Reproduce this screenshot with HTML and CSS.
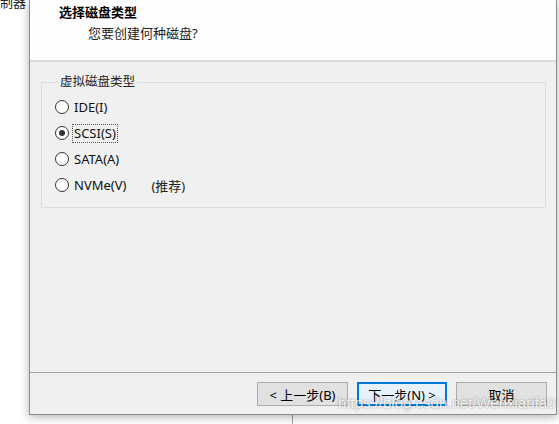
FILE: index.html
```html
<!DOCTYPE html>
<html lang="zh-CN">
<head>
    <meta charset="UTF-8">
    <meta name="viewport" content="width=device-width, initial-scale=1.0">
    <title>新建虚拟机向导</title>

    <link rel="stylesheet" href="styles.css">
</head>
<body>
    <div class="behind-text">制器</div>
    <div class="behind-line"></div>

    <div class="wizard">
        <div class="wizard-header">
            <div class="wizard-title">选择磁盘类型</div>
            <div class="wizard-subtitle">您要创建何种磁盘?</div>
        </div>

        <div class="wizard-body">
            <fieldset class="group">
                <legend class="group-title">虚拟磁盘类型</legend>
                <div class="radio-row">
                    <span class="radio"></span>
                    <span class="radio-label">IDE(I)</span>
                </div>
                <div class="radio-row">
                    <span class="radio checked"></span>
                    <span class="radio-label focused">SCSI(S)</span>
                </div>
                <div class="radio-row">
                    <span class="radio"></span>
                    <span class="radio-label">SATA(A)</span>
                </div>
                <div class="radio-row">
                    <span class="radio"></span>
                    <span class="radio-label">NVMe(V)</span>
                    <span class="hint">(推荐)</span>
                </div>
            </fieldset>
        </div>

        <div class="wizard-footer">
            <button class="btn">&lt; 上一步(B)</button>
            <button class="btn btn-default">下一步(N) &gt;</button>
            <button class="btn">取消</button>
        </div>
    </div>

    <div class="watermark">https://blog.csdn.net/Wenxiarifa0</div>
</body>
</html>
```

FILE: styles.css
```css
body {
    margin: 0;
    background-color: #ffffff;
    font-family: 'Noto Sans', 'Noto Sans CJK SC', sans-serif;
    font-size: 13px;
    color: #000;
    overflow: hidden;
}
.behind-text {
    position: absolute;
    left: 0;
    top: -6px;
    font-size: 13px;
    line-height: 16px;
    color: #222;
}
.behind-line {
    position: absolute;
    left: 292px;
    top: 400px;
    width: 1px;
    height: 30px;
    background-color: #a0a0a0;
}
.wizard {
    position: absolute;
    left: 29px;
    top: 0;
    width: 526px;
    border: 1px solid #8c8c8c;
    border-top: none;
    background-color: #f0f0f0;
    box-shadow: 0 2px 9px rgba(0,0,0,0.3);
}
.wizard-header {
    background-color: #fefefe;
    border-bottom: 2px solid #dadada;
    box-sizing: border-box;
    height: 62px;
}
.wizard-title {
    padding: 3px 0 0 29px;
    font-weight: bold;
    line-height: 18px;
}
.wizard-subtitle {
    padding: 3px 0 0 58px;
    line-height: 18px;
    color: #222;
}
.wizard-body {
    height: 311px;
    padding: 12px 10px 0 11px;
    box-sizing: border-box;
    border-bottom: 1px solid #a0a0a0;
}
.group {
    margin: 0;
    padding: 4px 0 9px 13px;
    border: 1px solid #dcdcdc;
    border-radius: 0;
}
.group-title {
    padding: 0 2px;
    margin-left: 3px;
    font-size: 12.5px;
    line-height: 16px;
    color: #222;
}
.radio-row {
    display: flex;
    align-items: center;
    height: 26px;
}
.radio {
    width: 12px;
    height: 12px;
    border: 1px solid #333;
    border-radius: 50%;
    background-color: #fff;
    display: flex;
    align-items: center;
    justify-content: center;
    margin-right: 3px;
}
.radio.checked::after {
    content: "";
    width: 6px;
    height: 6px;
    border-radius: 50%;
    background-color: #333;
}
.radio-label {
    line-height: 17px;
    padding: 0 1px;
    border: 1px dotted transparent;
    color: #111;
}
.radio-label.focused {
    border-color: #555;
}
.hint {
    margin-left: 23px;
    color: #222;
}
.wizard-footer {
    display: flex;
    justify-content: flex-end;
    gap: 9px;
    padding: 9px 9px 8px 0;
}
.btn {
    width: 91px;
    height: 24px;
    padding: 0;
    font-family: 'Noto Sans', 'Noto Sans CJK SC', sans-serif;
    font-size: 13px;
    background-color: #e1e1e1;
    border: 1px solid #adadad;
    border-radius: 0;
    color: #000;
}
.btn-default {
    border: 2px solid #0078d7;
    background-color: #e5f1fb;
    width: 90px;
}
.watermark {
    position: absolute;
    left: 338px;
    top: 394px;
    font-family: 'Liberation Sans', sans-serif;
    font-size: 15px;
    color: rgba(255,255,255,0.85);
    text-shadow: 0 0 2px rgba(0,0,0,0.45);
    white-space: nowrap;
}
```
